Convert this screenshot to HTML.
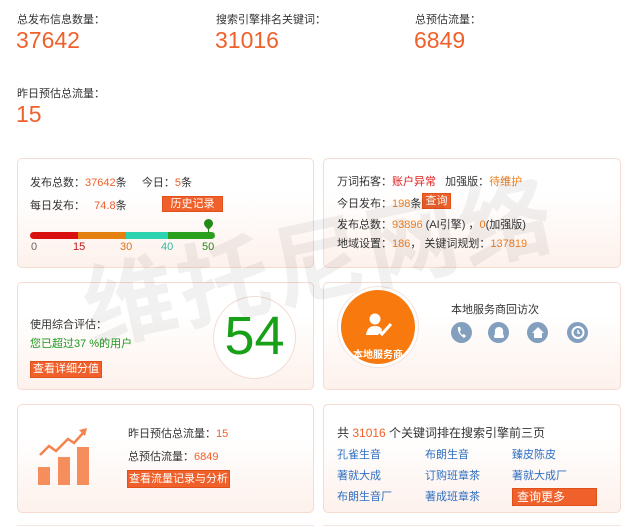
<!DOCTYPE html>
<html><head><meta charset="utf-8"><style>
*{margin:0;padding:0;box-sizing:border-box}
body{width:634px;height:527px;background:#fff;font-family:"Liberation Sans","Noto Sans CJK SC",sans-serif;font-size:11px;color:#333;position:relative;overflow:hidden}
.a{position:absolute;white-space:nowrap}
.lbl{font-size:11px;color:#333}
.big{font-size:23px;color:#f0602a}
.card{position:absolute;border:1px solid #f6dcd0;border-radius:5px;background:linear-gradient(#fff 30%,#fdf1ec)}
.o{color:#f0602a}
.btn{position:absolute;background:#f0602a;color:#fff;font-size:11px;text-align:center;white-space:nowrap;border:1px solid #e0501a}
.lk{color:#2f6fc0;font-size:11px}
.ic{position:absolute;width:21px;height:21px;border-radius:50%;background:#829fbd}
</style></head><body>
<div class="a lbl" style="left:17px;top:11px">总发布信息数量：</div>
<div class="a big" style="left:16px;top:27px">37642</div>
<div class="a lbl" style="left:216px;top:11px">搜索引擎排名关键词：</div>
<div class="a big" style="left:215px;top:27px">31016</div>
<div class="a lbl" style="left:415px;top:11px">总预估流量：</div>
<div class="a big" style="left:414px;top:27px">6849</div>
<div class="a lbl" style="left:17px;top:85px">昨日预估总流量：</div>
<div class="a big" style="left:16px;top:101px">15</div>

<div class="card" style="left:17px;top:158px;width:297px;height:110px"></div>
<div class="card" style="left:323px;top:158px;width:298px;height:110px"></div>
<div class="card" style="left:17px;top:282px;width:297px;height:108px"></div>
<div class="card" style="left:323px;top:282px;width:298px;height:108px"></div>
<div class="card" style="left:17px;top:404px;width:297px;height:109px"></div>
<div class="card" style="left:323px;top:404px;width:298px;height:109px"></div>
<div class="a" style="left:17px;top:525px;width:297px;border-top:1px solid #f6e6e0"></div>
<div class="a" style="left:323px;top:525px;width:298px;border-top:1px solid #f6e6e0"></div>

<!-- card1 -->
<div class="a" style="left:30px;top:174px">发布总数：<span class="o">37642</span>条 &nbsp; &nbsp; 今日：<span class="o">5</span>条</div>
<div class="a" style="left:30px;top:197px">每日发布： &nbsp; <span class="o">74.8</span>条</div>
<div class="btn" style="left:162px;top:196px;width:61px;height:16px;line-height:14px">历史记录</div>
<div class="a" style="left:30px;top:232px;width:185px;height:7px;border-radius:4px;overflow:hidden;display:flex">
<div style="width:48px;background:#d91010"></div><div style="width:48px;background:#e3800f"></div><div style="width:42px;background:#2ad4b0"></div><div style="flex:1;background:#2aa01e"></div></div>
<div class="a" style="left:204px;top:219px;width:9px;height:9px;border-radius:50% 50% 50% 0;transform:rotate(-45deg);background:#238a18"></div>
<div class="a" style="left:208px;top:226px;width:1px;height:7px;background:#238a18"></div>
<div class="a" style="left:31px;top:241px;color:#666">0</div>
<div class="a" style="left:73px;top:241px;color:#c4161c">15</div>
<div class="a" style="left:120px;top:241px;color:#e07015">30</div>
<div class="a" style="left:161px;top:241px;color:#33b8a0">40</div>
<div class="a" style="left:202px;top:241px;color:#2a8a1e">50</div>

<!-- card2 -->
<div class="a" style="left:337px;top:173px">万词拓客：<span style="color:#e21c1c">账户异常</span> &nbsp; 加强版：<span style="color:#f08020">待维护</span></div>
<div class="a" style="left:337px;top:195px">今日发布：<span style="color:#f08020">198</span>条</div>
<div class="btn" style="left:422px;top:193px;width:29px;height:16px;line-height:14px">查询</div>
<div class="a" style="left:337px;top:216px">发布总数：<span style="color:#f08020">93896</span> (AI引擎) ，<span style="color:#f08020">0</span>(加强版)</div>
<div class="a" style="left:337px;top:235px">地域设置：<span style="color:#f08020">186</span>， 关键词规划：<span style="color:#f08020">137819</span></div>

<!-- card3 -->
<div class="a" style="left:30px;top:316px">使用综合评估：</div>
<div class="a" style="left:30px;top:335px;color:#1c9a1c">您已超过37 %的用户</div>
<div class="btn" style="left:30px;top:361px;width:72px;height:17px;line-height:15px">查看详细分值</div>
<div class="a" style="left:213px;top:296px;width:83px;height:83px;border-radius:50%;background:#fff;border:1px solid #f2ddd5"></div>
<div class="a" style="left:213px;top:306px;width:83px;text-align:center;font-size:54px;line-height:60px;color:#18a018">54</div>

<!-- card4 -->
<div class="a" style="left:337px;top:286px;width:82px;height:82px;border-radius:50%;background:#fff;border:1px solid #f5e3dc"></div>
<div class="a" style="left:341px;top:290px;width:74px;height:74px;border-radius:50%;background:#f87a0e"></div>
<svg class="a" style="left:364px;top:313px" width="30" height="26" viewBox="0 0 30 26"><circle cx="11" cy="6" r="5.5" fill="#fff"/><path d="M2 22 Q3 13 11 13 Q17 13 18 17 L14 22 Z" fill="#fff"/><path d="M14 16 L18 21 L27 11" stroke="#fff" stroke-width="3" fill="none"/></svg>
<div class="a" style="left:341px;top:346px;width:74px;text-align:center;color:#fff;font-size:10px;font-weight:bold">本地服务商</div>
<div class="a" style="left:451px;top:301px">本地服务商回访次</div>
<div class="ic" style="left:451px;top:322px"></div>
<div class="ic" style="left:488px;top:322px"></div>
<div class="ic" style="left:527px;top:322px"></div>
<div class="ic" style="left:567px;top:322px"></div>
<svg class="a" style="left:451px;top:322px" width="140" height="21" viewBox="0 0 140 21">
<path d="M7 5 Q6 11 13 16 L15 14 L13 12 L11 13 Q9 11 9 9 L10 8 L9 5 Z" fill="#fff"/>
<path d="M44 16 Q42 15 44 12 Q43 5 48 5 Q53 5 52 12 Q54 15 52 16 Z" fill="#fff"/>
<path d="M81 11 L87 5 L93 11 L91 11 L91 16 L83 16 L83 11 Z" fill="#fff"/>
<circle cx="127" cy="10.5" r="5.5" stroke="#fff" stroke-width="2" fill="none"/><path d="M127 8 V11 H129" stroke="#fff" stroke-width="1.5" fill="none"/>
</svg>

<!-- card5 -->
<svg class="a" style="left:36px;top:426px" width="56" height="62" viewBox="0 0 56 62">
<path d="M4 29 L13 20 L20 25 L32 13 L38 17 L48 6" stroke="#f3834f" stroke-width="2.5" fill="none"/>
<path d="M43 4 L51 2 L49 10 Z" fill="#f3834f"/>
<rect x="2" y="41" width="12" height="18" fill="#f58e5c"/>
<rect x="22" y="31" width="12" height="28" fill="#f58e5c"/>
<rect x="41" y="21" width="12" height="38" fill="#f58e5c"/>
</svg>
<div class="a" style="left:128px;top:425px">昨日预估总流量：<span class="o">15</span></div>
<div class="a" style="left:128px;top:448px">总预估流量：<span class="o">6849</span></div>
<div class="btn" style="left:127px;top:470px;width:103px;height:18px;line-height:16px">查看流量记录与分析</div>

<!-- card6 -->
<div class="a" style="left:337px;top:424px;font-size:12px">共 <span class="o">31016</span> 个关键词排在搜索引擎前三页</div>
<div class="a lk" style="left:337px;top:446px">孔雀生音</div>
<div class="a lk" style="left:425px;top:446px">布朗生音</div>
<div class="a lk" style="left:512px;top:446px">臻皮陈皮</div>
<div class="a lk" style="left:337px;top:467px">著就大成</div>
<div class="a lk" style="left:425px;top:467px">订购班章茶</div>
<div class="a lk" style="left:512px;top:467px">著就大成厂</div>
<div class="a lk" style="left:337px;top:488px">布朗生音厂</div>
<div class="a lk" style="left:425px;top:488px">著成班章茶</div>
<div class="btn" style="left:512px;top:488px;width:85px;height:18px;line-height:16px;font-size:12px;text-align:left;padding-left:4px">查询更多</div>

<div class="a" style="left:70px;top:240px;font-size:92px;font-weight:bold;color:rgba(0,0,0,0.055);transform:rotate(-12deg);transform-origin:left top;letter-spacing:4px;font-family:'Noto Sans CJK SC',sans-serif">维托尼网络</div>
</body></html>
